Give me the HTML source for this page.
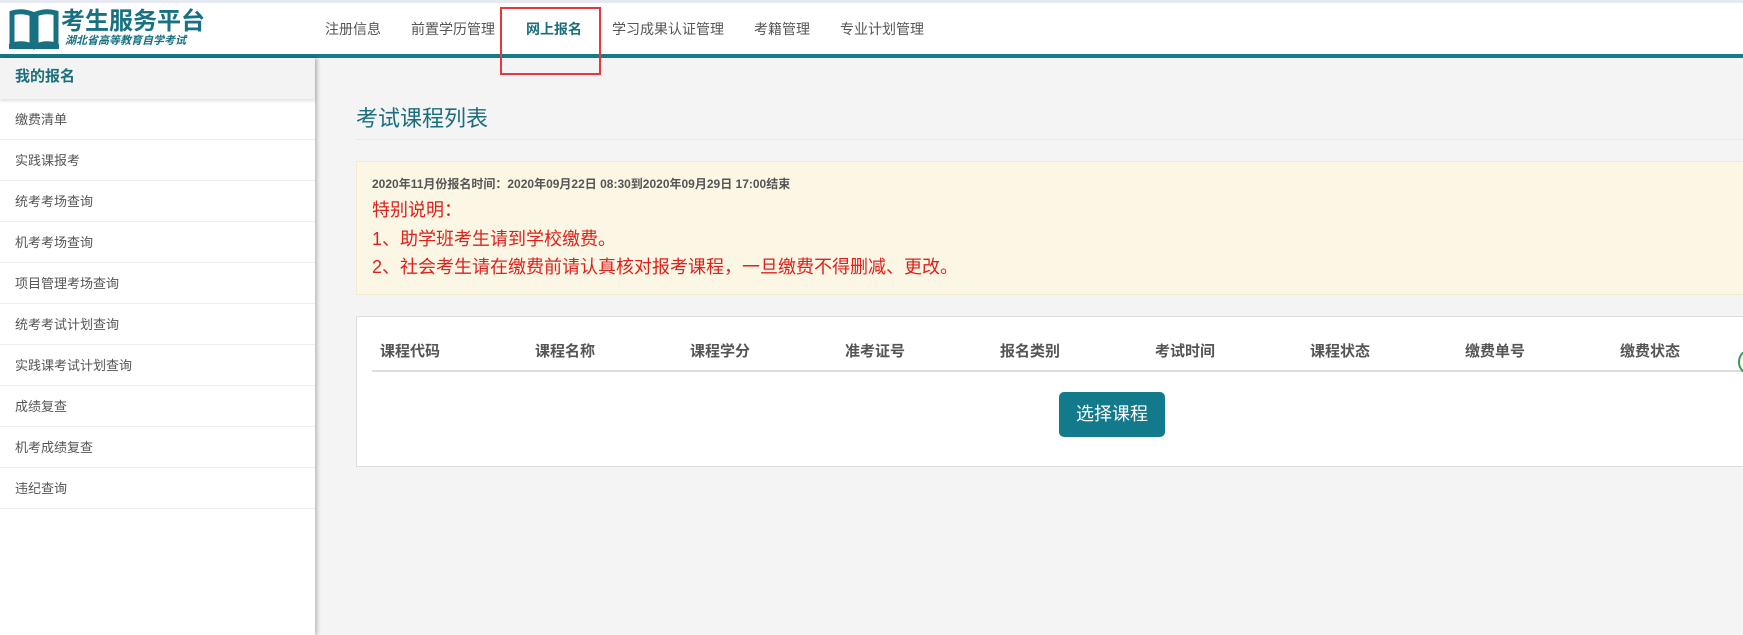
<!DOCTYPE html>
<html><head><meta charset="utf-8"><style>
*{margin:0;padding:0;box-sizing:border-box}
body{width:1743px;height:635px;overflow:hidden;background:#f4f4f4;font-family:"Liberation Sans","Microsoft YaHei","Noto Sans CJK SC",sans-serif;position:relative}
.top{position:absolute;left:0;top:0;width:1743px;height:3px;background:#e6e9f2}
.hdr{position:absolute;left:0;top:3px;width:1743px;height:51px;background:#fff}
.bar{position:absolute;left:0;top:54px;width:1743px;height:4px;background:#177b88}
.logo-t{position:absolute;left:61px;top:8px;font-size:24px;font-weight:bold;color:#177182;line-height:28px}
.logo-s{position:absolute;left:65px;top:35px;font-size:11px;font-weight:bold;color:#177182;font-style:italic;line-height:12px}
.nav{position:absolute;top:20px;font-size:14px;color:#555;line-height:18px}
.red{position:absolute;left:500px;top:7px;width:101px;height:68px;border:2px solid #e8363c}
.side{position:absolute;left:0;top:58px;width:315px;height:577px;background:#fff;box-shadow:2px 0 4px rgba(0,0,0,.25)}
.sh{height:41px;background:#f3f3f3;color:#1b6e7d;font-weight:bold;font-size:15px;line-height:38px;padding-left:15px;box-shadow:0 2px 3px rgba(0,0,0,.12)}
.si{height:41px;border-bottom:1px solid #eee;font-size:13px;color:#555;line-height:41px;padding-left:15px}
.title{position:absolute;left:356px;top:104px;font-size:22px;color:#1b6e7d;line-height:30px}
.tl{position:absolute;left:356px;top:139px;width:1387px;height:1px;background:#e8e8e8}
.warn{position:absolute;left:356px;top:161px;width:1400px;height:134px;background:#fcf6e4;border:1px solid #f4ead0;padding:14px 15px}
.w1{font-size:12px;font-weight:bold;color:#555;line-height:16px;margin-bottom:4px}
.wr{font-size:18px;color:#e0201c;line-height:28.5px}
.panel{position:absolute;left:356px;top:316px;width:1400px;height:151px;background:#fff;border:1px solid #ddd}
.th{position:absolute;top:25px;font-size:15px;font-weight:bold;color:#555;line-height:20px}
.hl{position:absolute;left:15px;top:53px;width:1400px;height:2px;background:#ddd}
.btn{position:absolute;left:702px;top:75px;width:106px;height:45px;background:#137a8b;border-radius:5px;color:#fff;font-size:18px;line-height:45px;text-align:center}
.dot{position:absolute;left:1738px;top:350px;width:20px;height:24px;border-radius:50%;border:2px solid #3a9a4a;background:#fff}
</style></head><body>
<div class="top"></div>
<div class="hdr"></div>
<svg style="position:absolute;left:9px;top:9px" width="50" height="41" viewBox="0 0 50 41">
<path d="M3 4 Q13 1 23 5 L23 37 Q13 33 3 36 Z" fill="none" stroke="#177182" stroke-width="5"/>
<path d="M47 4 Q37 1 27 5 L27 37 Q37 33 47 36 Z" fill="none" stroke="#177182" stroke-width="5"/>
<path d="M0 35 L0 40 L50 40 L50 35" fill="#177182"/>
</svg>
<div class="logo-t">考生服务平台</div>
<div class="logo-s">湖北省高等教育自学考试</div>
<div class="nav" style="left:325px">注册信息</div>
<div class="nav" style="left:411px">前置学历管理</div>
<div class="nav" style="left:526px;color:#1b6e7d;font-weight:bold">网上报名</div>
<div class="nav" style="left:612px">学习成果认证管理</div>
<div class="nav" style="left:754px">考籍管理</div>
<div class="nav" style="left:840px">专业计划管理</div>
<div class="bar"></div>
<div class="red"></div>
<div class="side">
<div class="sh">我的报名</div>
<div class="si">缴费清单</div>
<div class="si">实践课报考</div>
<div class="si">统考考场查询</div>
<div class="si">机考考场查询</div>
<div class="si">项目管理考场查询</div>
<div class="si">统考考试计划查询</div>
<div class="si">实践课考试计划查询</div>
<div class="si">成绩复查</div>
<div class="si">机考成绩复查</div>
<div class="si">违纪查询</div>
</div>
<div class="title">考试课程列表</div>
<div class="tl"></div>
<div class="warn">
<div class="w1">2020年11月份报名时间：2020年09月22日 08:30到2020年09月29日 17:00结束</div>
<div class="wr">特别说明：</div>
<div class="wr">1、助学班考生请到学校缴费。</div>
<div class="wr">2、社会考生请在缴费前请认真核对报考课程，一旦缴费不得删减、更改。</div>
</div>
<div class="panel">
<div class="th" style="left:23px">课程代码</div>
<div class="th" style="left:178px">课程名称</div>
<div class="th" style="left:333px">课程学分</div>
<div class="th" style="left:488px">准考证号</div>
<div class="th" style="left:643px">报名类别</div>
<div class="th" style="left:798px">考试时间</div>
<div class="th" style="left:953px">课程状态</div>
<div class="th" style="left:1108px">缴费单号</div>
<div class="th" style="left:1263px">缴费状态</div>
<div class="hl"></div>
<div class="btn">选择课程</div>
</div>
<div class="dot"></div>
</body></html>
